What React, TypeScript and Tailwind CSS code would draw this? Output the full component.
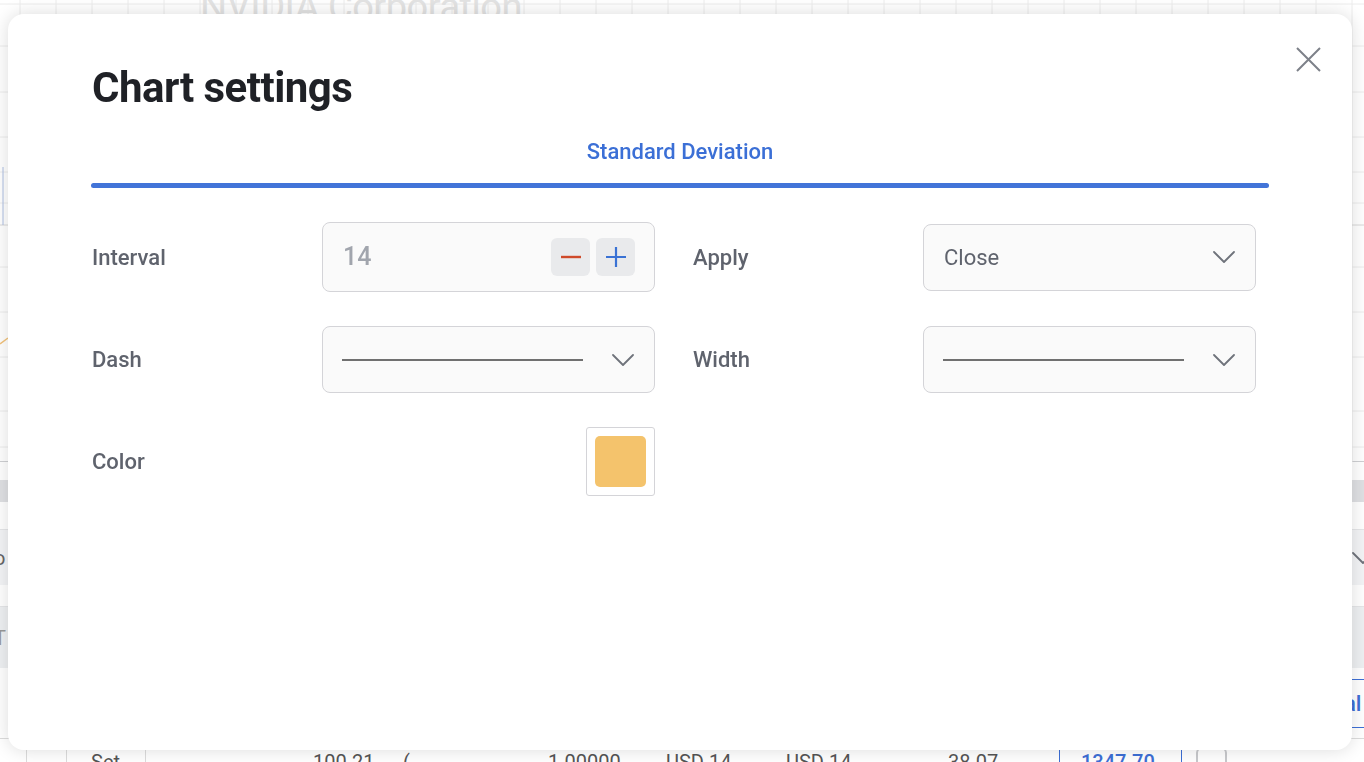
import React from 'react';

function Chevron() {
  return (
    <svg width="22" height="12" viewBox="0 0 22 12" fill="none">
      <polyline points="1,1 11,11 21,1" stroke="#6f737b" strokeWidth="1.8" strokeLinecap="round" strokeLinejoin="round" />
    </svg>
  );
}

function ChartGrid() {
  const cols = Array.from({ length: 38 }, (_, i) => 20 + i * 36);
  const rows = [4, 46, 92, 137, 172, 203, 225, 267, 312, 357, 411, 447];
  return (
    <svg className="absolute inset-0" width="1364" height="462">
      {cols.map((x) => (
        <line key={x} x1={x} y1="0" x2={x} y2="462" stroke="#ececec" strokeWidth="1" />
      ))}
      {rows.map((y) => (
        <line key={y} x1="0" y1={y} x2="1364" y2={y} stroke={y === 225 ? '#d8d8d8' : '#ececec'} strokeWidth="1" />
      ))}
      <line x1="3" y1="167" x2="3" y2="225" stroke="#aebfe3" strokeWidth="1" />
      <path d="M0 344 Q4 341 8 338" stroke="#f2c27a" strokeWidth="1.5" fill="none" />
    </svg>
  );
}

function BackgroundPage() {
  return (
    <div className="w-[1364px] h-[762px] overflow-hidden bg-white flex flex-col font-['Roboto',sans-serif]">
      <div className="relative h-[462px] shrink-0 border-b border-[#cfd0d3]">
        <ChartGrid />
        <div className="relative -mt-[17px] pl-[200px] text-[38px] leading-[48px] tracking-[-0.5px] text-[#e3e3e3]">NVIDIA Corporation</div>
      </div>
      <div className="h-[18px] shrink-0" />
      <div className="h-[22px] shrink-0 bg-[#dfe0e3]" />
      <div className="h-[28px] shrink-0 border-b border-[#e5e6e8]" />
      <div className="h-[55px] shrink-0 bg-[#f3f4f6] flex items-center justify-between text-[20px] text-[#666]">
        <span className="-ml-[6px]">o</span>
        <span className="-mr-[10px]"><Chevron /></span>
      </div>
      <div className="h-[22px] shrink-0 border-b border-[#e5e6e8]" />
      <div className="h-[61px] shrink-0 bg-[#eef0f2] flex items-center text-[20px] text-[#999]">
        <span className="-ml-[6px]">T</span>
      </div>
      <div className="h-[70px] shrink-0 flex justify-end items-center">
        <div className="h-[49px] w-[20px] border-y border-[#3d6fd6] flex items-center text-[22px] font-medium text-[#3d6fd6]">al</div>
      </div>
      <div className="flex-1 border-t border-[#dcdcdc] flex text-[20px] text-[#555] leading-[30px] pt-[8px]">
        <div className="w-[27px] border-r border-[#dcdcdc]" />
        <div className="w-[40px] border-r border-[#dcdcdc]" />
        <div className="w-[79px] border-r border-[#dcdcdc] pl-[24px]">Set</div>
        <div className="w-[167px]" />
        <div className="w-[90px]">100.21</div>
        <div className="w-[145px]">(</div>
        <div className="w-[118px]">1.00000</div>
        <div className="w-[120px]">USD 14</div>
        <div className="w-[162px]">USD 14</div>
        <div className="w-[111px]">38.07</div>
        <div className="w-[123px] border-x border-[#3d6fd6] pl-[21px] text-[#3d6fd6] font-medium">1347.70</div>
        <div className="pl-[14px]">
          <div className="w-[31px] h-[31px] rounded-[6px] border-2 border-[#c8c9cc] bg-white" />
        </div>
      </div>
    </div>
  );
}

function Label({ children }: { children: React.ReactNode }) {
  return <div className="w-[230px] shrink-0 text-[22px] font-medium text-[#5f636d]">{children}</div>;
}

function LineSelect() {
  return (
    <div className="w-[333px] h-[67px] rounded-[8px] border border-[#d4d4d8] bg-[#fafafa] flex items-center pl-[19px] pr-[20px]">
      <div className="w-[241px] h-[2px] bg-[#707070]" />
      <div className="ml-auto"><Chevron /></div>
    </div>
  );
}

function SettingsModal() {
  return (
    <div className="fixed left-[8px] top-[14px] w-[1344px] h-[736px] rounded-[16px] bg-white shadow-[0_0_18px_rgba(0,0,0,0.14)] px-[83px] pt-[49px] font-['Roboto',sans-serif]">
      <button className="absolute right-[31px] top-[33px] w-[25px] h-[25px]">
        <svg width="25" height="25" viewBox="0 0 25 25" fill="none">
          <path d="M1 1 L24 24 M24 1 L1 24" stroke="#7d8189" strokeWidth="2" />
        </svg>
      </button>

      <h2 className="text-[42px] leading-[50px] font-bold tracking-[-0.5px] text-[#1f2126] pl-[1px]">Chart settings</h2>

      <div className="mt-[24px]">
        <div className="text-center text-[22px] leading-[30px] font-medium text-[#3b6fd6]">Standard Deviation</div>
        <div className="mt-[16px] h-[5px] rounded-full bg-[#4274d8]" />
      </div>

      <div className="mt-[34px] flex flex-col gap-[34px] pl-[1px]">
        {/* Row 1 */}
        <div className="flex items-center">
          <div className="flex items-center">
            <Label>Interval</Label>
            <div className="w-[333px] h-[70px] rounded-[8px] border border-[#d4d4d8] bg-[#fafafa] flex items-center pl-[20px] pr-[19px]">
              <span className="text-[25px] font-medium text-[#a1a5ad]">14</span>
              <div className="ml-auto flex gap-[6px]">
                <button className="w-[39px] h-[38px] rounded-[6px] bg-[#e9eaec] flex items-center justify-center">
                  <svg width="22" height="22" viewBox="0 0 22 22" fill="none">
                    <path d="M1 11 H21" stroke="#cf4a2a" strokeWidth="2.4" />
                  </svg>
                </button>
                <button className="w-[39px] h-[38px] rounded-[6px] bg-[#e9eaec] flex items-center justify-center">
                  <svg width="22" height="22" viewBox="0 0 22 22" fill="none">
                    <path d="M1 11 H21 M11 1 V21" stroke="#3a72d4" strokeWidth="2.2" />
                  </svg>
                </button>
              </div>
            </div>
          </div>
          <div className="flex items-center ml-[38px]">
            <Label>Apply</Label>
            <div className="w-[333px] h-[67px] rounded-[8px] border border-[#d4d4d8] bg-[#fafafa] flex items-center pl-[20px] pr-[20px]">
              <span className="text-[22px] text-[#5f636d]">Close</span>
              <div className="ml-auto"><Chevron /></div>
            </div>
          </div>
        </div>

        {/* Row 2 */}
        <div className="flex items-center">
          <div className="flex items-center">
            <Label>Dash</Label>
            <LineSelect />
          </div>
          <div className="flex items-center ml-[38px]">
            <Label>Width</Label>
            <LineSelect />
          </div>
        </div>

        {/* Row 3 */}
        <div className="flex items-center">
          <Label>Color</Label>
          <div className="w-[333px] flex justify-end">
            <div className="w-[69px] h-[69px] rounded-[3px] border border-[#d4d4d8] bg-white p-[8px]">
              <div className="w-full h-full rounded-[5px] bg-[#f4c36c]" />
            </div>
          </div>
        </div>
      </div>
    </div>
  );
}

export default function App() {
  return (
    <div className="relative w-[1364px] h-[762px] overflow-hidden">
      <BackgroundPage />
      <SettingsModal />
    </div>
  );
}
